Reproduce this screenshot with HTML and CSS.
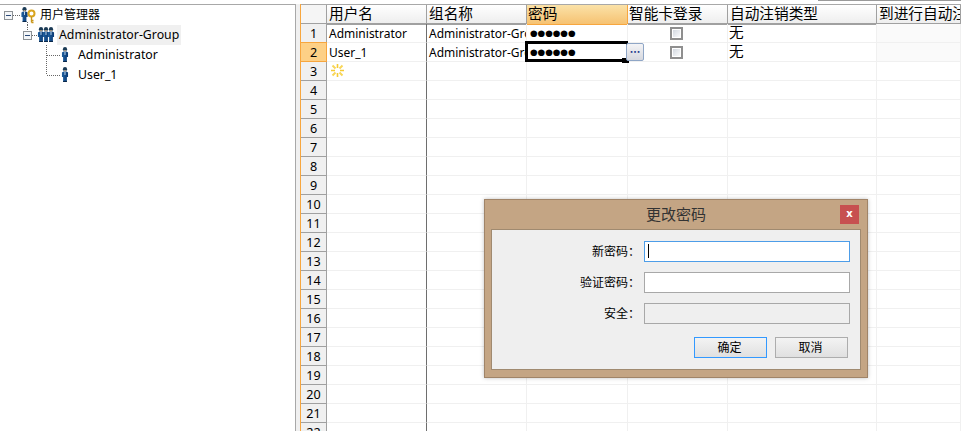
FILE: index.html
```html
<!DOCTYPE html>
<html lang="zh">
<head>
<meta charset="utf-8">
<title>用户管理器</title>
<link rel="stylesheet" href="styles.css">
</head>
<body>
<svg class="defs" width="0" height="0" aria-hidden="true">
  <defs>
    <linearGradient id="shirt" x1="0" x2="1" y1="0" y2="0"><stop offset="0" stop-color="#1f5f9f"/><stop offset="1" stop-color="#0b3a73"/></linearGradient>
    <symbol id="person" viewBox="0 0 7 15">
      <circle cx="3.5" cy="2.2" r="2.1" fill="#1a3a55"/>
      <rect x="2.6" y="3.2" width="1.8" height="1.6" fill="#d9b58c"/>
      <path d="M0.4 5.6 L2 4.6 L5 4.6 L6.6 5.6 L6.6 10 L5.4 10 L5.4 15 L1.6 15 L1.6 10 L0.4 10 Z" fill="url(#shirt)"/>
      <path d="M3 4.6 L4 4.6 L3.9 8 L3.1 8 Z" fill="#cfe4f5"/>
      <rect x="1.6" y="14" width="3.8" height="1" fill="#0a2748"/>
    </symbol>
    <symbol id="minus" viewBox="0 0 9 9">
      <rect x="0.5" y="0.5" width="8" height="8" fill="#f4f6f8" stroke="#8d9296"/>
      <rect x="2" y="4" width="5" height="1" fill="#2b4a78"/>
    </symbol>
  </defs>
</svg>
<div class="topstrip"><div class="topstrip-seg"></div></div>
<div class="app">
  <div class="tree">
    <div class="tree-row">
      <svg class="tw-root" width="38" height="20" viewBox="0 0 38 20">
        <use href="#minus" x="4" y="6" width="9" height="9"/>
        <path d="M13 10.5H21M27.5 17V20" stroke="#666" stroke-dasharray="1 1" fill="none"/>
        <use href="#person" x="21" y="2" width="7" height="15"/>
        <circle cx="31.5" cy="8.5" r="3" fill="none" stroke="#d9a520" stroke-width="2"/>
        <path d="M31.5 11.5V17.5M31.5 15.5H33.5M31.5 17.5H33.5" stroke="#c9961a" stroke-width="1.4" fill="none"/>
      </svg>
      <span class="tree-label tree-label-cjk">用户管理器</span>
    </div>
    <div class="tree-row">
      <svg width="57" height="20" viewBox="0 0 57 20">
        <path d="M27.5 0V6M32 10.5H38" stroke="#666" stroke-dasharray="1 1" fill="none"/>
        <use href="#minus" x="23" y="6" width="9" height="9"/>
        <use href="#person" x="37.5" y="2" width="7" height="15"/>
        <use href="#person" x="42.5" y="2" width="7" height="15"/>
        <use href="#person" x="47.5" y="2" width="7" height="15"/>
      </svg>
      <span class="tree-label tree-label-sel">Administrator-Group</span>
    </div>
    <div class="tree-row">
      <svg width="76" height="20" viewBox="0 0 76 20">
        <path d="M46.5 0V20M47 10.5H60" stroke="#666" stroke-dasharray="1 1" fill="none"/>
        <use href="#person" x="61.5" y="2" width="7" height="15"/>
      </svg>
      <span class="tree-label">Administrator</span>
    </div>
    <div class="tree-row">
      <svg width="76" height="20" viewBox="0 0 76 20">
        <path d="M46.5 0V10M47 10.5H60" stroke="#666" stroke-dasharray="1 1" fill="none"/>
        <use href="#person" x="61.5" y="2" width="7" height="15"/>
      </svg>
      <span class="tree-label">User_1</span>
    </div>
  </div>
  <div class="splitter"></div>
  <div class="grid">
    <div class="hd corner"></div><div class="hd">用户名</div><div class="hd">组名称</div><div class="hd hd-on">密码</div><div class="hd hd-tight">智能卡登录</div><div class="hd">自动注销类型</div><div class="hd">到进行自动注销时间</div>

    <div class="rh">1</div><div class="c">Administrator</div><div class="c">Administrator-Group</div><div class="c pw">●●●●●●</div><div class="c mid"><span class="check"></span></div><div class="c cjk">无</div><div class="c shade"></div>

    <div class="rh rh-on">2</div><div class="c">User_1</div><div class="c">Administrator-Group</div><div class="c pw edit">●●●●●●<span class="sel"></span><span class="sel-handle"></span><span class="more">•••</span></div><div class="c mid"><span class="check"></span></div><div class="c cjk">无</div><div class="c shade"></div>

    <div class="rh">3</div><div class="c"><svg class="star" width="13" height="13" viewBox="0 0 13 13"><path d="M6.5 0V4M6.5 9V13M0 6.5H4M9 6.5H13" stroke="#f5cb35" stroke-width="1.6" fill="none"/><path d="M1.5 1.5L4.500 4.500M8.500 8.500L11.500 11.500M11.500 1.500L8.500 4.500M4.500 8.500L1.500 11.500" stroke="#f8d75a" stroke-width="2" fill="none"/></svg></div><div class="c"></div><div class="c"></div><div class="c"></div><div class="c"></div><div class="c"></div>

    <div class="rh">4</div><div class="c"></div><div class="c"></div><div class="c"></div><div class="c"></div><div class="c"></div><div class="c"></div>
    <div class="rh">5</div><div class="c"></div><div class="c"></div><div class="c"></div><div class="c"></div><div class="c"></div><div class="c"></div>
    <div class="rh">6</div><div class="c"></div><div class="c"></div><div class="c"></div><div class="c"></div><div class="c"></div><div class="c"></div>
    <div class="rh">7</div><div class="c"></div><div class="c"></div><div class="c"></div><div class="c"></div><div class="c"></div><div class="c"></div>
    <div class="rh">8</div><div class="c"></div><div class="c"></div><div class="c"></div><div class="c"></div><div class="c"></div><div class="c"></div>
    <div class="rh">9</div><div class="c"></div><div class="c"></div><div class="c"></div><div class="c"></div><div class="c"></div><div class="c"></div>
    <div class="rh">10</div><div class="c"></div><div class="c"></div><div class="c"></div><div class="c"></div><div class="c"></div><div class="c"></div>
    <div class="rh">11</div><div class="c"></div><div class="c"></div><div class="c"></div><div class="c"></div><div class="c"></div><div class="c"></div>
    <div class="rh">12</div><div class="c"></div><div class="c"></div><div class="c"></div><div class="c"></div><div class="c"></div><div class="c"></div>
    <div class="rh">13</div><div class="c"></div><div class="c"></div><div class="c"></div><div class="c"></div><div class="c"></div><div class="c"></div>
    <div class="rh">14</div><div class="c"></div><div class="c"></div><div class="c"></div><div class="c"></div><div class="c"></div><div class="c"></div>
    <div class="rh">15</div><div class="c"></div><div class="c"></div><div class="c"></div><div class="c"></div><div class="c"></div><div class="c"></div>
    <div class="rh">16</div><div class="c"></div><div class="c"></div><div class="c"></div><div class="c"></div><div class="c"></div><div class="c"></div>
    <div class="rh">17</div><div class="c"></div><div class="c"></div><div class="c"></div><div class="c"></div><div class="c"></div><div class="c"></div>
    <div class="rh">18</div><div class="c"></div><div class="c"></div><div class="c"></div><div class="c"></div><div class="c"></div><div class="c"></div>
    <div class="rh">19</div><div class="c"></div><div class="c"></div><div class="c"></div><div class="c"></div><div class="c"></div><div class="c"></div>
    <div class="rh">20</div><div class="c"></div><div class="c"></div><div class="c"></div><div class="c"></div><div class="c"></div><div class="c"></div>
    <div class="rh">21</div><div class="c"></div><div class="c"></div><div class="c"></div><div class="c"></div><div class="c"></div><div class="c"></div>
    <div class="rh">22</div><div class="c"></div><div class="c"></div><div class="c"></div><div class="c"></div><div class="c"></div><div class="c"></div>
  </div>
</div>

<div class="dialog">
  <div class="dialog-title">更改密码<span class="dialog-close">x</span></div>
  <div class="dialog-body">
    <div class="form">
      <label class="form-label">新密码：</label><div class="field field-focus"><span class="caret"></span></div>
      <label class="form-label">验证密码：</label><div class="field"></div>
      <label class="form-label">安全：</label><div class="field field-off"></div>
    </div>
    <div class="actions">
      <button class="btn btn-default">确定</button>
      <button class="btn">取消</button>
    </div>
  </div>
</div>
</body>
</html>
```
FILE: styles.css
```css
* { box-sizing: border-box; }
html, body { margin: 0; padding: 0; }
body {
  width: 961px;
  height: 431px;
  overflow: hidden;
  position: relative;
  background: #fff;
  color: #000;
  font-family: "Noto Sans", "Noto Sans CJK SC", sans-serif;
  font-size: 12px;
}
.defs { position: absolute; }

.topstrip { height: 4px; display: flex; justify-content: flex-end; align-items: flex-start; }
.topstrip-seg { width: 143px; height: 1px; background: #9a9a9a; }

.app { display: flex; height: 427px; }

.tree {
  width: 295px;
  flex: none;
  border-top: 1px solid #a8a8a8;
}
.tree-row { display: flex; align-items: center; height: 20px; }
.tree-row svg { flex: none; }
.tree-label { padding: 0 2px; height: 20px; line-height: 20px; font-size: 12.3px; white-space: nowrap; }
.tree-label-cjk { font-size: 12px; line-height: 19px; }
.tree-label-sel { background: #f0f0f0; line-height: 19px; }

.splitter {
  width: 6px;
  flex: none;
  background: #f0f0f0;
  border-left: 1px solid #a8a8a8;
  border-right: 1px solid #f7a63e;
}

.grid {
  flex: 1;
  min-width: 0;
  overflow: hidden;
  display: grid;
  grid-template-columns: 26px 100px 100px 101px 100px 149px 84px;
  grid-auto-rows: 19px;
  border-top: 1px solid #a8a8a8;
  align-content: start;
}
.hd {
  background: linear-gradient(#ffffff, #eeeeee);
  border-right: 1px solid #a0a0a0;
  border-bottom: 2px solid #a0a0a0;
  margin-bottom: -1px;
  padding-left: 2px;
  font-size: 14.67px;
  line-height: 17px;
  white-space: nowrap;
  overflow: hidden;
}
.hd:last-of-type { border-right: 0; }
.hd-tight { padding-left: 1px; }
.corner { background: #f5f5f5; }
.hd-on {
  background: linear-gradient(#fbe2a8, #f6c272);
  border-right-color: #f7a63e;
  border-bottom: 1px solid #f7a63e;
  padding-left: 1px;
}
.c {
  border-right: 1px solid #f0f0f0;
  border-bottom: 1px solid #f0f0f0;
  padding-left: 2px;
  line-height: 20px;
  white-space: nowrap;
  overflow: hidden;
}
.c:nth-child(7n+2) { border-right-color: #6e6e6e; }
.cjk { font-size: 14.67px; line-height: 17px; padding-left: 1px; }
.shade { background: #fafafa; }
.mid { display: flex; align-items: center; justify-content: center; padding: 0 2px 0 0; }
.pw { font-family: "DejaVu Sans", sans-serif; font-size: 8.7px; padding-left: 3px; line-height: 18px; }
.edit { position: relative; overflow: visible; }
.rh {
  background: #f0f0f0;
  border-right: 1px solid #a0a0a0;
  border-bottom: 1px solid #a0a0a0;
  text-align: center;
  line-height: 20px;
  font-size: 12.6px;
}
.rh-on {
  background: #fdd086;
  border: 1px solid #f7a63e;
  border-left: 0;
  margin-top: -1px;
  height: 20px;
  line-height: 20px;
}
.check {
  width: 13px;
  height: 13px;
  border: 2px solid #8f8f8f;
  outline: 1px solid #fff;
  outline-offset: -3px;
  background: linear-gradient(135deg, #cdd3dc, #ffffff);
}
.star { display: block; margin-top: 2px; margin-left: 2px; }

.sel {
  position: absolute;
  left: -2px;
  top: -2px;
  right: -1px;
  bottom: -1px;
  border: 3px solid #000;
  border-right-width: 2px;
  pointer-events: none;
}
.sel-handle {
  position: absolute;
  right: -2px;
  bottom: -2px;
  width: 7px;
  height: 5px;
  background: #000;
}
.more {
  position: absolute;
  left: 99px;
  top: 0;
  width: 18px;
  height: 18px;
  border: 1px solid #8fa6c6;
  border-radius: 2px;
  background: linear-gradient(#f4f4f6, #d6d8de);
  color: #1c3a8c;
  font-family: "DejaVu Sans", sans-serif;
  font-weight: 700;
  font-size: 5.5px;
  line-height: 16px;
  text-align: center;
}

.dialog {
  position: absolute;
  left: 484px;
  top: 199px;
  width: 384px;
  height: 179px;
  background: #c4a584;
  border: 1px solid #a08468;
  box-shadow: 0 0 4px rgba(0, 0, 0, 0.25);
  padding: 0 6px 7px;
  display: flex;
  flex-direction: column;
}
.dialog-title {
  height: 29px;
  flex: none;
  text-align: center;
  font-size: 15px;
  line-height: 29px;
  color: #333;
}
.dialog-close {
  position: absolute;
  right: 8px;
  top: 5px;
  width: 19px;
  height: 19px;
  background: #c75050;
  color: #fff;
  font-family: "DejaVu Sans", sans-serif;
  font-weight: 700;
  font-size: 10px;
  line-height: 17px;
  text-align: center;
}
.dialog-body {
  flex: 1;
  background: #efefef;
  border: 1px solid #a08a70;
  padding: 11px 10px 0 0;
  display: flex;
  flex-direction: column;
}
.form {
  display: grid;
  grid-template-columns: 148px 206px;
  column-gap: 4px;
  row-gap: 10px;
  grid-auto-rows: 21px;
  justify-content: start;
}
.form-label { text-align: right; font-size: 12px; line-height: 21px; white-space: nowrap; }
.field { background: #fff; border: 1px solid #a8a8a8; position: relative; }
.field-focus { border-color: #4d9de8; }
.field-off { background: #efefef; }
.caret { position: absolute; left: 3px; top: 2px; width: 1px; height: 14px; background: #000; }
.actions { display: flex; justify-content: flex-end; gap: 8px; margin-top: 13px; padding-right: 2px; }
.btn {
  width: 73px;
  height: 21px;
  padding: 0 2px 0 0;
  font-family: inherit;
  font-size: 12px;
  line-height: 19px;
  color: #000;
  background: linear-gradient(#f3f3f3, #e0e0e0);
  border: 1px solid #adadad;
  border-radius: 0;
}
.btn-default { border-color: #3399ff; }
```
